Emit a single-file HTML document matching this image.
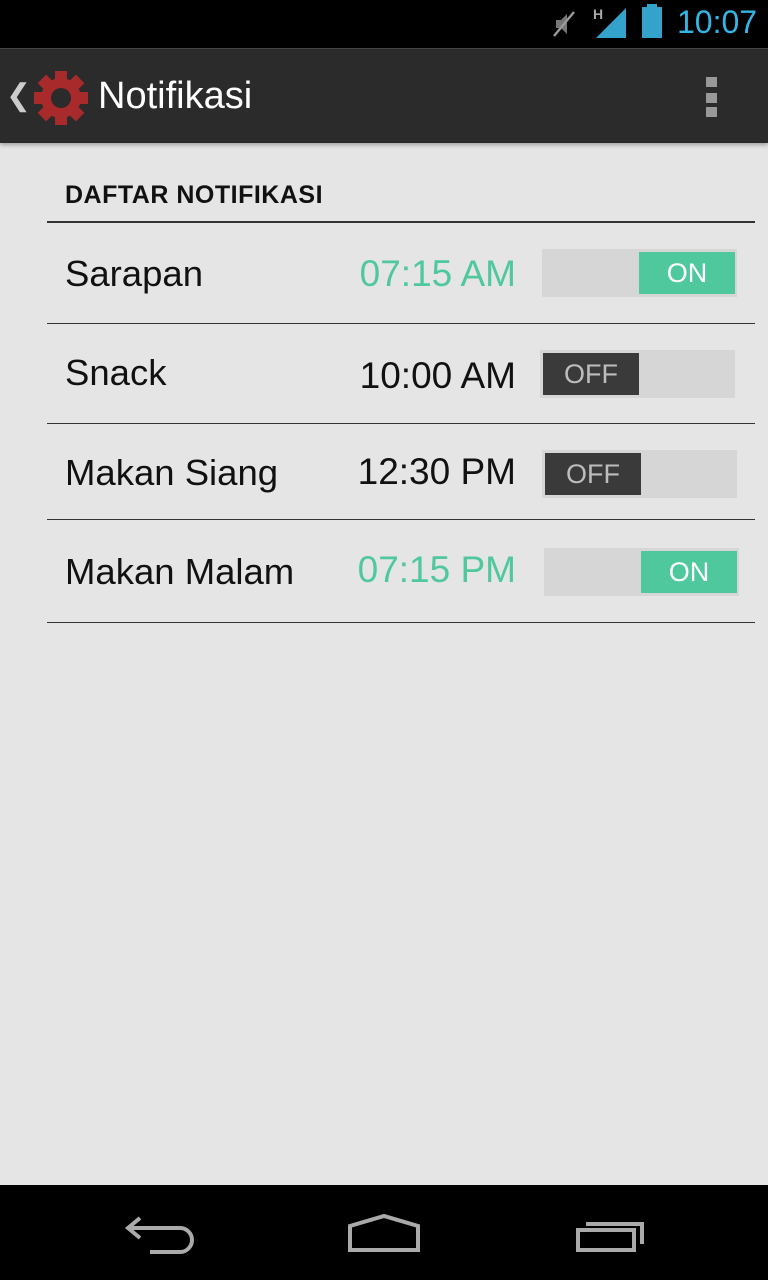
<!DOCTYPE html>
<html><head><meta charset="utf-8"><style>
*{margin:0;padding:0;box-sizing:border-box}
body{width:768px;height:1280px;background:#e5e5e5;font-family:"Liberation Sans",sans-serif;position:relative;overflow:hidden}
.a{position:absolute}
.name{position:absolute;left:65px;font-size:36.5px;color:#111}
.time{position:absolute;right:252px;font-size:37px}
.tr{position:absolute;width:195px;height:48px;background:#d6d6d6}
.th{position:absolute;top:3px;width:96px;height:42px;font-size:27px;text-align:center;line-height:42px}
.on{background:#50c89e;color:#fff;right:2px}
.off{background:#3a3a3a;color:#bdbdbd;left:3px}
.hr{position:absolute;left:47px;width:708px;height:1px;background:#333}
</style></head><body>
<div class="a" style="left:0;top:0;width:768px;height:48px;background:#000"></div>
<svg class="a" style="left:550px;top:8px" width="30" height="32" viewBox="0 0 30 32"><path d="M6 12h5l6-6v20l-6-6H6z" fill="#777"/><path d="M4 28L24 4" stroke="#999" stroke-width="2.5"/></svg>
<div class="a" style="left:593px;top:6px;font-size:14px;font-weight:bold;color:#aaa">H</div>
<svg class="a" style="left:596px;top:8px" width="30" height="30" viewBox="0 0 30 30"><path d="M0 30L30 0V30z" fill="#33a3cc"/></svg>
<div class="a" style="left:642px;top:7px;width:20px;height:31px;background:#33a3cc"></div>
<div class="a" style="left:647px;top:4px;width:10px;height:4px;background:#33a3cc"></div>
<div class="a" style="left:677px;top:4px;font-size:32px;color:#33b5e5">10:07</div>
<div class="a" style="left:0;top:48px;width:768px;height:95px;background:#2b2b2b;border-top:1px solid #444;box-shadow:0 2px 4px rgba(0,0,0,.3)"></div>
<div class="a" style="left:6px;top:78px;font-size:30px;color:#ccc">❮</div>
<svg class="a" style="left:33px;top:70px" width="56" height="56" viewBox="-28 -28 56 56"><g fill="#a82a2a"><circle r="20"/><g id="t"><rect x="-6" y="-27" width="12" height="12"/></g><use href="#t" transform="rotate(45)"/><use href="#t" transform="rotate(90)"/><use href="#t" transform="rotate(135)"/><use href="#t" transform="rotate(180)"/><use href="#t" transform="rotate(225)"/><use href="#t" transform="rotate(270)"/><use href="#t" transform="rotate(315)"/></g><circle r="10" fill="#2b2b2b"/></svg>
<div class="a" style="left:98px;top:75px;font-size:38px;color:#fff">Notifikasi</div>
<div class="a" style="left:706px;top:77px;width:11px;height:10px;background:#999"></div>
<div class="a" style="left:706px;top:93px;width:11px;height:10px;background:#999"></div>
<div class="a" style="left:706px;top:107px;width:11px;height:10px;background:#999"></div>
<div class="a" style="left:65px;top:181px;font-size:25px;font-weight:bold;color:#111;letter-spacing:0.5px">DAFTAR NOTIFIKASI</div>
<div class="hr" style="top:221px;height:2px"></div>
<div class="name" style="top:253px">Sarapan</div><div class="time" style="top:253px;color:#50c89e">07:15 AM</div>
<div class="tr" style="left:542px;top:249px"><div class="th on">ON</div></div>
<div class="hr" style="top:323px"></div>
<div class="name" style="top:352px">Snack</div><div class="time" style="top:355px;color:#111">10:00 AM</div>
<div class="tr" style="left:540px;top:350px"><div class="th off">OFF</div></div>
<div class="hr" style="top:423px"></div>
<div class="name" style="top:452px">Makan Siang</div><div class="time" style="top:451px;color:#111">12:30 PM</div>
<div class="tr" style="left:542px;top:450px"><div class="th off">OFF</div></div>
<div class="hr" style="top:519px"></div>
<div class="name" style="top:551px">Makan Malam</div><div class="time" style="top:549px;color:#50c89e">07:15 PM</div>
<div class="tr" style="left:544px;top:548px"><div class="th on">ON</div></div>
<div class="hr" style="top:622px"></div>
<div class="a" style="left:0;top:1185px;width:768px;height:95px;background:#000"></div>
<svg class="a" style="left:120px;top:1210px" width="80" height="50" viewBox="0 0 80 50"><path d="M10 18H60a12 12 0 0 1 0 24H30M20 8L8 18l12 10" stroke="#aaa" stroke-width="4" fill="none"/></svg>
<svg class="a" style="left:344px;top:1210px" width="80" height="50" viewBox="0 0 80 50"><path d="M6 16L40 6l34 10v24H6z" stroke="#aaa" stroke-width="4" fill="none"/></svg>
<svg class="a" style="left:572px;top:1212px" width="76" height="46" viewBox="0 0 76 46"><path d="M6 18h56v20H6z" stroke="#aaa" stroke-width="4" fill="none"/><path d="M14 12h56v20" stroke="#aaa" stroke-width="4" fill="none"/></svg>
</body></html>
